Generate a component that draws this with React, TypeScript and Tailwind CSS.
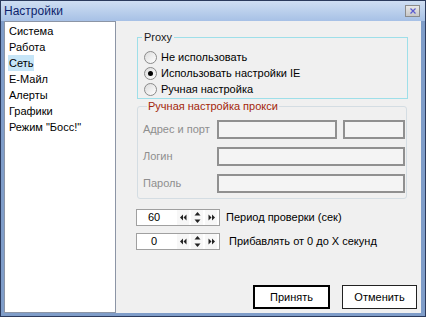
import React from "react";

const font = { fontFamily: '"Liberation Sans", Arial, sans-serif' };

function Radio({ checked, label }: { checked?: boolean; label: string }) {
  return (
    <div className="flex items-center h-[16px]">
      <div className="ml-[6px] w-[13px] h-[13px] rounded-full border border-[#8a8a8a] bg-gradient-to-br from-[#dcdcdc] to-white flex items-center justify-center">
        {checked && <div className="w-[5px] h-[5px] rounded-full bg-black" />}
      </div>
      <span className="ml-[4px] text-black">{label}</span>
    </div>
  );
}

function LeftArrows() {
  return (
    <svg width="7" height="7" viewBox="0 0 7 7">
      <path d="M3 0.5 L0 3.5 L3 6.5 Z" fill="#222" />
      <path d="M6.5 0.5 L3.5 3.5 L6.5 6.5 Z" fill="#222" />
    </svg>
  );
}
function RightArrows() {
  return (
    <svg width="7" height="7" viewBox="0 0 7 7">
      <path d="M0.5 0.5 L3.5 3.5 L0.5 6.5 Z" fill="#222" />
      <path d="M4 0.5 L7 3.5 L4 6.5 Z" fill="#222" />
    </svg>
  );
}
function UpDown() {
  return (
    <svg width="7" height="13" viewBox="0 0 7 13">
      <path d="M3.5 1 L6.5 4.5 L0.5 4.5 Z" fill="#222" />
      <path d="M0.5 8.5 L6.5 8.5 L3.5 12 Z" fill="#222" />
    </svg>
  );
}

function Spin({ value, label, labelGap }: { value: string; label: string; labelGap: string }) {
  return (
    <div className="flex items-center h-[17px]">
      <div className="w-[84px] h-[17px] border border-[#a0a0a0] bg-white flex items-center">
        <div className="w-[34px] text-center text-black">{value}</div>
        <div className="w-[12px] h-[15px] ml-[6px] flex items-center justify-center bg-[#f7f7f7]">
          <LeftArrows />
        </div>
        <div className="w-[12px] h-[15px] ml-[2px] flex items-center justify-center bg-[#f7f7f7]">
          <UpDown />
        </div>
        <div className="w-[12px] h-[15px] ml-[2px] flex items-center justify-center bg-[#f7f7f7]">
          <RightArrows />
        </div>
      </div>
      <span className={labelGap + " text-black"}>{label}</span>
    </div>
  );
}

export default function App() {
  const items = ["Система", "Работа", "Сеть", "Е-Майл", "Алерты", "Графики", 'Режим "Босс!"'];
  return (
    <div
      className="w-[426px] h-[317px] bg-[#7f9dc9] border border-[#2b3a5c] flex flex-col text-[11px] leading-[13px] overflow-hidden"
      style={font}
    >
      {/* Title bar */}
      <div className="h-[20px] shrink-0 bg-gradient-to-b from-[#cfdef2] to-[#a7c1e6] flex items-center justify-between pl-[3px] pr-[5px]">
        <span className="text-[12px] leading-[15px] text-[#0d1f6b]">Настройки</span>
        <div className="w-[15px] h-[12px] mt-[-1px] border border-[#8b8b8b] bg-gradient-to-b from-[#e8e8e8] to-[#c8c8c8] flex items-center justify-center">
          <svg width="6" height="6" viewBox="0 0 6 6">
            <path d="M0.5 0.5 L5.5 5.5 M5.5 0.5 L0.5 5.5" stroke="#5a5ad0" strokeWidth="1.2" />
          </svg>
        </div>
      </div>
      {/* Body */}
      <div className="flex-1 flex pl-[3px] pr-[4px] pb-[3px] min-h-0">
        {/* Left list */}
        <div className="w-[112px] shrink-0 bg-white border border-[#8c95a5] pt-[1px] pl-[3px]">
          {items.map((it) => (
            <div key={it} className="h-[16px] flex items-center">
              <span
                className={
                  "px-[1px] h-[16px] flex items-center text-black " +
                  (it === "Сеть" ? "bg-[#c6e5f7]" : "")
                }
              >
                {it}
              </span>
            </div>
          ))}
        </div>
        {/* Right content */}
        <div className="flex-1 bg-[#f0f0f0] flex flex-col pl-[20px] pr-[4px] pt-[10px] pb-[4px]">
          <fieldset className="ml-[1px] mr-[9px] border border-[#9edfe9] pt-[5px] pb-[1px]">
            <legend className="ml-[4px] px-[2px] text-[#1a1a1a]">Proxy</legend>
            <Radio label="Не использовать" />
            <Radio checked label="Использовать настройки IE" />
            <Radio label="Ручная настройка" />
          </fieldset>
          <fieldset className="mt-[1px] ml-[1px] mr-[10px] border border-[#d4dde3] rounded-[3px] pt-[7px] pb-[5px] pl-[5px] pr-[1px]">
            <legend className="ml-[4px] px-[1px] text-[#a3260a]">Ручная настройка прокси</legend>
            <div className="flex flex-col gap-[8px]">
              <div className="flex items-center h-[19px]">
                <span className="w-[74px] text-[#8e8e8e]">Адрес и порт</span>
                <div className="w-[120px] h-[19px] border-2 border-[#909090] bg-[#f4f4f4]" />
                <div className="ml-[6px] w-[62px] h-[19px] border-2 border-[#909090] bg-[#f4f4f4]" />
              </div>
              <div className="flex items-center h-[19px]">
                <span className="w-[74px] text-[#8e8e8e]">Логин</span>
                <div className="flex-1 h-[19px] border-2 border-[#909090] bg-[#f4f4f4]" />
              </div>
              <div className="flex items-center h-[19px]">
                <span className="w-[74px] text-[#8e8e8e]">Пароль</span>
                <div className="flex-1 h-[19px] border-2 border-[#909090] bg-[#f4f4f4]" />
              </div>
            </div>
          </fieldset>
          <div className="mt-[10px] flex flex-col gap-[7px]">
            <Spin value="60" label="Период проверки (сек)" labelGap="ml-[6px]" />
            <Spin value="0" label="Прибавлять от 0 до X секунд" labelGap="ml-[9px]" />
          </div>
          <div className="mt-auto flex justify-end gap-[12px]">
            <button className="w-[77px] h-[24px] border-2 border-black bg-white text-black text-[11px]" style={font}>
              Принять
            </button>
            <button className="w-[75px] h-[24px] border border-[#222] bg-white text-black text-[11px]" style={font}>
              Отменить
            </button>
          </div>
        </div>
      </div>
    </div>
  );
}
